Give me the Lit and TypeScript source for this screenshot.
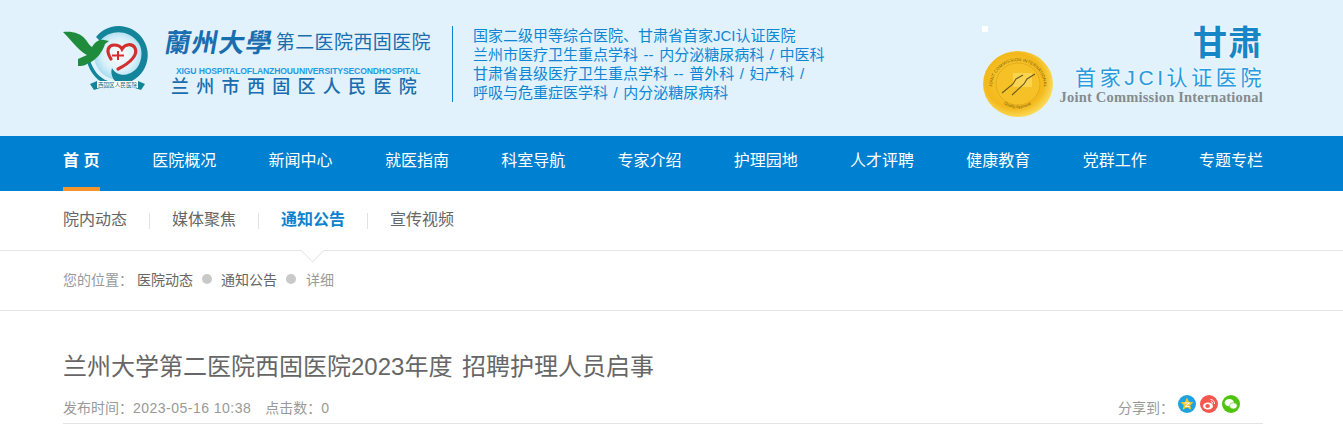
import { LitElement, html, css } from 'lit';
import { customElement } from 'lit/decorators.js';

const NAV = ['医院概况', '新闻中心', '就医指南', '科室导航', '专家介绍', '护理园地', '人才评聘', '健康教育', '党群工作', '专题专栏'];
const SUB = ['院内动态', '媒体聚焦', '通知公告', '宣传视频'];

@customElement('app-root')
export class AppRoot extends LitElement {
  static styles = css`
    :host {
      display: block;
      font-family: 'Liberation Sans', 'Noto Sans CJK SC', sans-serif;
      background: #fff;
      color: #666;
    }

    .wrap {
      width: 1200px;
      margin-left: 63px;
    }

    .top {
      height: 136px;
      background: #e1f2fd;
    }

    .top .wrap {
      position: relative;
      height: 136px;
      display: flex;
      align-items: flex-start;
    }

    .logo {
      width: 95px;
      height: 80px;
      margin: 25px 0 0 -3px;
      flex: none;
    }

    .brand {
      width: 266px;
      margin: 23px 0 0 10px;
      flex: none;
      color: #1a6dae;
      white-space: nowrap;
    }

    .brand-cn {
      display: flex;
      align-items: center;
      height: 40px;
    }

    .brand-big {
      font-size: 26px;
      font-weight: 700;
      letter-spacing: 1px;
      transform: skewX(-10deg);
      width: 113px;
      line-height: 40px;
    }

    .brand-small {
      font-size: 19px;
      line-height: 40px;
      letter-spacing: 0.4px;
    }

    .brand-en {
      font-size: 8.6px;
      font-weight: 700;
      line-height: 10px;
      color: #1f9be2;
      margin: 3px 0 0 11px;
      letter-spacing: -0.15px;
    }

    .brand-name {
      font-size: 18px;
      font-weight: 500;
      line-height: 24px;
      letter-spacing: 7.3px;
      margin: -1px 0 0 6px;
    }

    .info {
      margin: 26px 0 0 21px;
      width: 390px;
      height: 76px;
      flex: none;
      box-sizing: border-box;
      border-left: 1px solid #0a82d0;
      padding-left: 20px;
      font-size: 15px;
      line-height: 19px;
      word-spacing: 1.4px;
      color: #0f86d4;
      white-space: nowrap;
    }

    .badge {
      margin-left: auto;
      width: 280px;
      display: flex;
      align-items: flex-start;
      flex: none;
    }

    .medal {
      width: 70px;
      height: 66px;
      margin-top: 51px;
      flex: none;
    }

    .badge-text {
      flex: 1;
      text-align: right;
      white-space: nowrap;
      margin-top: 21px;
      margin-left: -70px;
    }

    .gs {
      font-size: 34px;
      line-height: 44px;
      font-weight: 700;
      letter-spacing: 1px;
      color: #1786c6;
      text-shadow: 0 0 3px #fff;
    }

    .jci {
      font-size: 21px;
      line-height: 28px;
      color: #2a9ade;
      letter-spacing: 3.6px;
      margin-right: -2px;
      margin-top: -1px;
      text-shadow: 0 0 3px #fff;
    }

    .jci-en {
      font-family: 'Liberation Serif', serif;
      font-size: 14.5px;
      font-weight: 700;
      line-height: 14px;
      letter-spacing: 0.2px;
      color: #868b8e;
      margin-top: -2px;
    }

    .speck {
      position: absolute;
      left: 919px;
      top: 26px;
      width: 6px;
      height: 6px;
      background: #fff;
    }

    .nav {
      height: 55px;
      background: #0080d0;
    }

    .nav .wrap {
      display: flex;
      justify-content: space-between;
      height: 55px;
    }

    .nav a {
      font-size: 16px;
      line-height: 50px;
      color: #fff;
      white-space: nowrap;
      box-sizing: border-box;
      height: 55px;
    }

    .nav a.home {
      font-weight: 700;
      width: 37px;
      white-space: pre;
      border-bottom: 4px solid #f7952d;
    }

    .sub {
      height: 59px;
      display: flex;
      align-items: center;
    }

    .sub .wrap {
      display: flex;
      align-items: center;
    }

    .sub a {
      font-size: 16px;
      line-height: 24px;
      color: #666;
      margin-top: -2px;
    }

    .sub a.on {
      color: #0a82d0;
      font-weight: 700;
    }

    .sub i {
      width: 1px;
      height: 16px;
      background: #e2e2e2;
      margin: 0 22px;
    }

    .crumb {
      position: relative;
      height: 59px;
      border-top: 1px solid #e4e4e4;
      border-bottom: 1px solid #e4e4e4;
    }

    .caret {
      position: absolute;
      left: 304px;
      top: -9px;
      width: 16px;
      height: 16px;
      background: #fff;
      border-right: 1px solid #e8e8e8;
      border-bottom: 1px solid #e8e8e8;
      transform: rotate(45deg);
    }

    .crumb .wrap {
      display: flex;
      align-items: center;
      height: 55px;
      font-size: 14px;
      color: #666;
    }

    .crumb .label {
      color: #999;
      width: 74px;
    }

    .crumb b {
      width: 10px;
      height: 10px;
      border-radius: 50%;
      background: #c9c9c9;
      margin: 0 9px;
    }

    .crumb .last {
      color: #999;
      margin-left: 1px;
    }

    .title {
      font-size: 24px;
      font-weight: 400;
      line-height: 36px;
      word-spacing: 3px;
      color: #666;
      margin: 38px 0 0;
    }

    .meta {
      display: flex;
      align-items: flex-start;
      height: 35px;
      margin-top: 4px;
      box-sizing: border-box;
      padding-top: 11px;
      border-bottom: 1px solid #e4e4e4;
      font-size: 14px;
      line-height: 16px;
      color: #999;
    }

    .meta .date {
      letter-spacing: 0.48px;
    }

    .meta .hits {
      margin-left: 14px;
    }

    .share {
      margin-left: auto;
      display: flex;
      align-items: flex-start;
      margin-right: 23px;
    }

    .share span {
      margin-right: 4px;
    }

    .share svg {
      width: 18px;
      height: 18px;
      margin-right: 4px;
      margin-top: -5px;
    }

    .share svg:last-child {
      margin-right: 0;
    }
  `;

  private logo() {
    return html`<svg class="logo" viewBox="60 25 95 80" xmlns="http://www.w3.org/2000/svg">
      <defs>
        <radialGradient id="disk" cx="0.5" cy="0.5" r="0.55">
          <stop offset="0" stop-color="#ffffff" />
          <stop offset="0.6" stop-color="#d8f0fa" />
          <stop offset="1" stop-color="#9ad6ec" />
        </radialGradient>
      </defs>
      <circle cx="119" cy="55" r="25" fill="url(#disk)" />
      <path d="M96 37 A29 29 0 1 1 118 84 C113 80 110 74 112 68 C116 76 128 78 137 68 C143 59 143 47 137 41 C128 30 110 29 100 41 Z" fill="#14849a" />
      <path d="M90 60 C93 70 99 78 108 81 L103 83 C96 79 90 72 87 62 Z" fill="#14849a" />
      <path d="M63 32 C72 31 81 33 86 40 C89 44 90 46 92 47 C95 42 99 39 104 40 L109 41 L105 44 C103 51 97 60 87 64 C84 66 81 66 78 66 L78 59 L87 55 C80 52 73 42 63 32 Z" fill="#1f8c3d" />
      <path d="M111 59 C105 50 109 45 114 45 C118 45 121 47 122 49 C125 44 132 43 135 48 C138 54 132 62 118 69" fill="none" stroke="#d22f2e" stroke-width="3.200" stroke-linecap="round" />
      <path d="M118 51 V60 M112 55.500 H124" fill="none" stroke="#d22f2e" stroke-width="2" />
      <path d="M90 84 L97 81 L100 88 L94 90 Z M145 84 L138 81 L135 88 L141 90 Z" fill="#14849a" />
      <rect x="97" y="81" width="41" height="7" fill="#fff" />
      <text x="117.500" y="87" font-size="5.600" text-anchor="middle" fill="#1d6b7c">西固区人民医院</text>
    </svg>`;
  }

  private medal() {
    return html`<svg class="medal" viewBox="0 0 70 66" xmlns="http://www.w3.org/2000/svg">
      <defs>
        <radialGradient id="gold" cx="0.45" cy="0.45" r="0.6">
          <stop offset="0" stop-color="#fbd23a" />
          <stop offset="0.7" stop-color="#f3b81b" />
          <stop offset="1" stop-color="#fde46a" />
        </radialGradient>
        <path id="arc" d="M9 36 A26 26 0 0 1 61 36" />
        <path id="arc2" d="M12 40 A24 24 0 0 0 58 40" />
      </defs>
      <ellipse cx="35" cy="33" rx="35" ry="33" fill="url(#gold)" />
      <ellipse cx="35" cy="33" rx="22" ry="21" fill="#f6c127" stroke="#d99c12" stroke-width="0.600" />
      <rect x="30" y="22" width="19" height="14" fill="#fbdc62" opacity="0.700" />
      <path d="M19 42 L30 33 L33 28 L40 24 M29 44 L41 33 L44 28 L52 23" fill="none" stroke="#6d5a1a" stroke-width="1.100" />
      <text font-size="4.200" fill="#7a5c10" letter-spacing="0.200"><textPath href="#arc">JOINT COMMISSION INTERNATIONAL</textPath></text>
      <text font-size="4" fill="#7a5c10"><textPath href="#arc2" startOffset="25%">Quality Approval</textPath></text>
    </svg>`;
  }

  private shareIcons() {
    return html`
      <svg viewBox="0 0 18 18" xmlns="http://www.w3.org/2000/svg">
        <circle cx="9" cy="9" r="9" fill="#1ca3e0" />
        <path d="M9 2.500 L11 7 L15.500 7.300 L12.200 10.300 L13.300 14.800 L9 12.600 L4.700 14.800 L5.800 10.300 L2.500 7.300 L7 7 Z" fill="#f6c52c" />
        <path d="M6.500 8 H11.500 L7 11.500 H11.500" fill="none" stroke="#fff" stroke-width="1" />
      </svg>
      <svg viewBox="0 0 18 18" xmlns="http://www.w3.org/2000/svg">
        <circle cx="9" cy="9" r="9" fill="#f5574f" />
        <ellipse cx="8" cy="11" rx="5" ry="3.600" fill="#fff" />
        <ellipse cx="7.600" cy="11" rx="2.300" ry="1.900" fill="#f5574f" />
        <path d="M10.500 4.500 A4 4 0 0 1 14.500 9 M10.800 6.500 A2 2 0 0 1 12.600 8.500" fill="none" stroke="#fff" stroke-width="1" />
      </svg>
      <svg viewBox="0 0 18 18" xmlns="http://www.w3.org/2000/svg">
        <circle cx="9" cy="9" r="9" fill="#4fc40f" />
        <ellipse cx="7.300" cy="7.600" rx="4.600" ry="3.700" fill="#fff" />
        <ellipse cx="11.300" cy="10.800" rx="3.900" ry="3.100" fill="#fff" stroke="#4fc40f" stroke-width="0.600" />
      </svg>
    `;
  }

  render() {
    return html`
      <div class="top">
        <div class="wrap">
          ${this.logo()}
          <div class="brand">
            <div class="brand-cn">
              <span class="brand-big">蘭州大學</span>
              <span class="brand-small">第二医院西固医院</span>
            </div>
            <div class="brand-en">XIGU HOSPITALOFLANZHOUUNIVERSITYSECONDHOSPITAL</div>
            <div class="brand-name">兰州市西固区人民医院</div>
          </div>
          <div class="info">
            <div>国家二级甲等综合医院、甘肃省首家JCI认证医院</div>
            <div>兰州市医疗卫生重点学科 -- 内分泌糖尿病科 / 中医科</div>
            <div>甘肃省县级医疗卫生重点学科 -- 普外科 / 妇产科 /</div>
            <div>呼吸与危重症医学科 / 内分泌糖尿病科</div>
          </div>
          <div class="badge">
            ${this.medal()}
            <div class="badge-text">
              <div class="gs">甘肃</div>
              <div class="jci">首家JCI认证医院</div>
              <div class="jci-en">Joint Commission International</div>
            </div>
          </div>
          <div class="speck"></div>
        </div>
      </div>
      <div class="nav">
        <div class="wrap">
          <a class="home">首 页</a>
          ${NAV.map(n => html`<a>${n}</a>`)}
        </div>
      </div>
      <div class="sub">
        <div class="wrap">
          ${SUB.map(
            (s, i) => html`${i > 0 ? html`<i></i>` : ''}<a class=${s === '通知公告' ? 'on' : ''}>${s}</a>`
          )}
        </div>
      </div>
      <div class="crumb">
        <div class="caret"></div>
        <div class="wrap">
          <span class="label">您的位置：</span>
          <span>医院动态</span><b></b><span>通知公告</span><b></b><span class="last">详细</span>
        </div>
      </div>
      <div class="wrap">
        <h1 class="title">兰州大学第二医院西固医院2023年度 招聘护理人员启事</h1>
        <div class="meta">
          <span>发布时间：<span class="date">2023-05-16 10:38</span></span>
          <span class="hits">点击数：0</span>
          <div class="share">
            <span>分享到：</span>
            ${this.shareIcons()}
          </div>
        </div>
      </div>
    `;
  }
}
